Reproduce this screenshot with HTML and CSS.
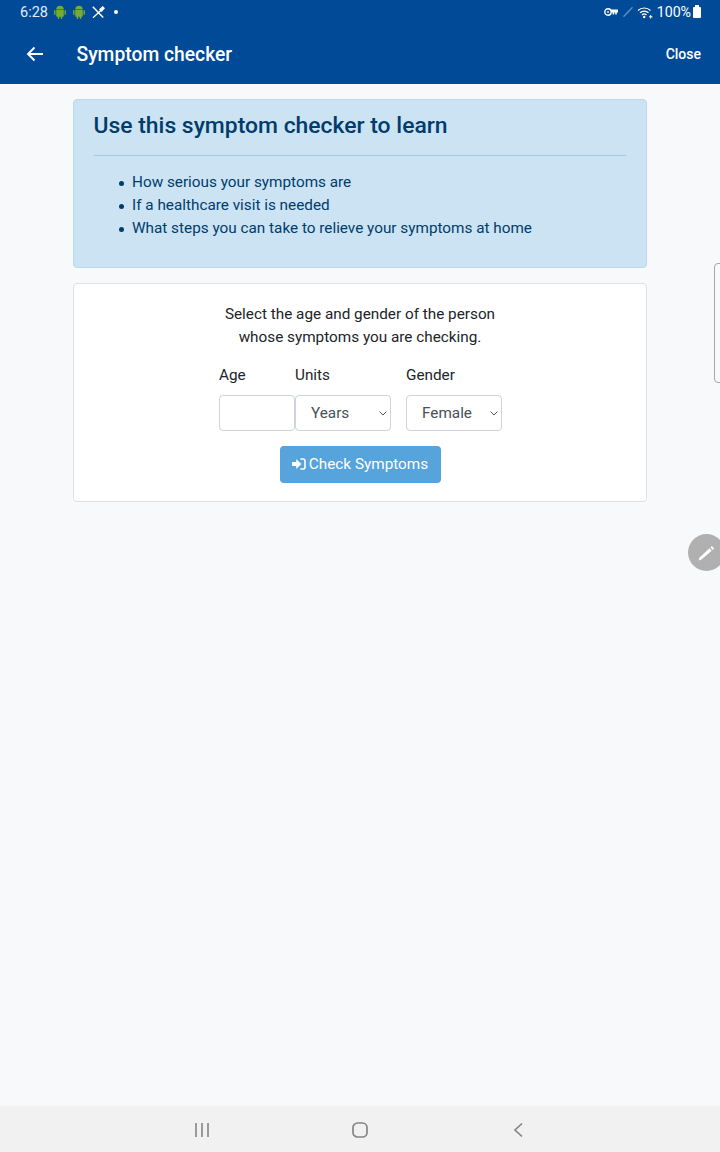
FILE: index.html
```html
<!DOCTYPE html>
<html lang="en">
<head>
  <meta charset="UTF-8" />
  <meta name="viewport" content="width=device-width, initial-scale=1.0"/>
  <title>Symptom checker</title>
  <link rel="stylesheet" href="styles.css">
</head>
<body>
  <div class="screen">
    <header class="appbar">
      <div class="statusbar">
        <div class="status-left">
          <span class="clock">6:28</span>
          <svg class="android" viewBox="0 0 12 14"><path d="M2.200 4.500a3.800 3.800 0 0 1 7.600 0zM2.200 5.100h7.600v5.700a.9.9 0 0 1-.9.9h-.6v1.500a.8.8 0 0 1-1.600 0v-1.500H5.300v1.500a.8.8 0 0 1-1.600 0v-1.500h-.6a.9.9 0 0 1-.9-.9zM.8 5.100a.7.7 0 0 1 .7.7v3.400a.7.7 0 0 1-1.400 0V5.800a.7.7 0 0 1 .7-.7zM11.200 5.100a.7.7 0 0 1 .7.7v3.400a.7.7 0 0 1-1.400 0V5.800a.7.7 0 0 1 .7-.7z" fill="#76ad2c"/></svg>
          <svg class="android" viewBox="0 0 12 14"><path d="M2.200 4.500a3.800 3.800 0 0 1 7.600 0zM2.200 5.100h7.600v5.700a.9.9 0 0 1-.9.9h-.6v1.500a.8.8 0 0 1-1.600 0v-1.500H5.300v1.500a.8.8 0 0 1-1.600 0v-1.500h-.6a.9.9 0 0 1-.9-.9zM.8 5.100a.7.7 0 0 1 .7.7v3.400a.7.7 0 0 1-1.400 0V5.800a.7.7 0 0 1 .7-.7zM11.200 5.100a.7.7 0 0 1 .7.7v3.400a.7.7 0 0 1-1.400 0V5.800a.7.7 0 0 1 .7-.7z" fill="#76ad2c"/></svg>
          <svg class="tools" viewBox="0 0 13 12"><path d="M.8 .8l10.400 10.700" stroke="#fff" stroke-width="1.500" fill="none"/><path d="M10.500 3L1 11.700" stroke="#fff" stroke-width="1.300" fill="none"/><path d="M7 3.500L10.700 0 13 2.300 9.500 6z" fill="#fff"/></svg>
          <span class="dot"></span>
        </div>
        <div class="status-right">
          <svg class="key" viewBox="0 0 14 8"><rect x=".8" y=".8" width="6.400" height="6.400" rx="3.200" stroke="#fff" stroke-width="1.400" fill="none"/><path d="M7 1.500h7v3h-1.200v2h-1.600v-2h-1v2H8.600v-2H7z" fill="#fff"/><circle cx="4" cy="4" r=".9" fill="#fff"/></svg>
          <svg class="slash" viewBox="0 0 10 10"><path d="M.5 9.700L9.500.3" stroke="#5f90c6" stroke-width="1.500"/></svg>
          <svg class="wifi" viewBox="0 0 16 13"><path d="M1 4.500a9 9 0 0 1 12.500 0M3 6.800a6.200 6.200 0 0 1 8.500 0M5 9a3.300 3.300 0 0 1 4.500 0" stroke="#fff" stroke-width="1.200" fill="none"/><circle cx="7.200" cy="11" r="1.200" fill="#fff"/><path d="M12 10.800h3.500M13.700 9v3.500" stroke="#fff" stroke-width="1"/></svg>
          <span class="battery-text">100%</span>
          <span class="battery"></span>
        </div>
      </div>
      <div class="toolbar">
        <svg class="back" viewBox="0 0 18 16"><path d="M17 8H2M8.500 1.500L2 8l6.500 6.500" stroke="#fff" stroke-width="1.900" fill="none"/></svg>
        <h1>Symptom checker</h1>
        <a class="close-link">Close</a>
      </div>
    </header>

    <main class="content">
      <section class="alert-box">
        <h2>Use this symptom checker to learn</h2>
        <hr>
        <ul>
          <li>How serious your symptoms are</li>
          <li>If a healthcare visit is needed</li>
          <li>What steps you can take to relieve your symptoms at home</li>
        </ul>
      </section>

      <section class="card">
        <p>Select the age and gender of the person<br>whose symptoms you are checking.</p>
        <form class="fields">
          <div class="field">
            <label for="age">Age</label>
            <input id="age" class="age-input" type="text">
          </div>
          <div class="field">
            <label for="units">Units</label>
            <div class="select-box" id="units">Years
              <svg viewBox="0 0 8 5"><path d="M.6.6L4 4 7.400.6" stroke="#555" stroke-width="1" fill="none"/></svg>
            </div>
          </div>
          <div class="field gender">
            <label for="gender">Gender</label>
            <div class="select-box" id="gender">Female
              <svg viewBox="0 0 8 5"><path d="M.6.6L4 4 7.400.6" stroke="#555" stroke-width="1" fill="none"/></svg>
            </div>
          </div>
        </form>
        <a class="btn">
          <svg viewBox="0 0 15 13"><path d="M0 4.200h4.500V1L10.200 6.500 4.500 12V8.800H0z" fill="#fff"/><path d="M9 1h2.800A2.200 2.200 0 0 1 14 3.200v6.600a2.200 2.200 0 0 1-2.200 2.200H9" stroke="#fff" stroke-width="1.700" fill="none"/></svg>
          Check Symptoms
        </a>
      </section>

      <!-- overlays from the device, they sit on top of the page -->
      <div class="edge-handle"></div>
      <div class="pen-button">
        <svg viewBox="0 0 18 16"><path d="M.5 15.500l1-3L11.500 3.300l2.200 2.400L3.500 14.500z" fill="#fff"/><path d="M12.500 2.400l1.400-1.300 2.300 2.400-1.500 1.400z" fill="#fff"/></svg>
      </div>
    </main>

    <nav class="navbar">
      <svg viewBox="0 0 16 16"><path d="M2 1v14M8 1v14M14 1v14" stroke="#858585" stroke-width="1.600"/></svg>
      <svg viewBox="0 0 16 16"><rect x="1" y="1" width="14" height="14" rx="4.500" stroke="#858585" stroke-width="1.700" fill="none"/></svg>
      <svg viewBox="0 0 16 16"><path d="M12 1.500L5 8l7 6.500" stroke="#858585" stroke-width="1.700" fill="none"/></svg>
    </nav>
  </div>
</body>
</html>
```

FILE: styles.css
```css
* {
  margin: 0;
  padding: 0;
  box-sizing: border-box;
  font-family: 'Roboto', sans-serif;
}

body {
  background-color: #f8f9fa;
  color: #212529;
}

.screen {
  display: flex;
  flex-direction: column;
  width: 720px;
  height: 1152px;
  overflow: hidden;
}

/* top bar */
.appbar {
  height: 84px;
  flex-shrink: 0;
  background-color: #004a98;
  color: #fff;
}

.statusbar {
  display: flex;
  justify-content: space-between;
  align-items: center;
  height: 24px;
  padding: 0 19px 0 20px;
}

.status-left,
.status-right {
  display: flex;
  align-items: center;
}

.clock {
  font-size: 14.500px;
  margin-right: 6px;
  color: #e4ecf5;
}

.android {
  width: 12px;
  height: 14px;
  margin-right: 7px;
}

.tools {
  width: 13px;
  height: 12px;
}

.dot {
  width: 4px;
  height: 4px;
  margin-left: 9px;
  border-radius: 50%;
  background-color: #fff;
}

.key {
  width: 14px;
  height: 8px;
  margin-right: 5px;
}

.slash {
  width: 10px;
  height: 10px;
  margin-right: 4px;
}

.wifi {
  width: 16px;
  height: 13px;
  margin-right: 4px;
}

.battery-text {
  font-size: 14.200px;
}

.battery {
  position: relative;
  width: 8px;
  height: 11px;
  margin-left: 2px;
  border-radius: 1px;
  background-color: #fff;
}

.battery::before {
  content: "";
  position: absolute;
  top: -2px;
  left: 2px;
  width: 4px;
  height: 2px;
  background-color: #fff;
}

.toolbar {
  display: flex;
  align-items: center;
  height: 60px;
  padding: 0 19px 0 26px;
}

.back {
  width: 18px;
  height: 16px;
  margin-right: 32.500px;
}

.toolbar h1 {
  flex: 1;
  font-size: 19.300px;
  font-weight: 500;
}

.close-link {
  font-size: 14px;
  font-weight: 500;
}

/* page */
.content {
  position: relative;
  flex: 1;
  padding: 15px 73px 0;
}

.alert-box {
  height: 169px;
  padding: 12px 20px;
  margin-bottom: 15px;
  color: #003c6c;
  background-color: #cce3f3;
  border: 1px solid #b8d9ee;
  border-radius: 4px;
}

.alert-box h2 {
  font-size: 22.900px;
  font-weight: 500;
  line-height: 27px;
  margin-left: -0.500px;
}

.alert-box hr {
  margin: 16px 0 15px;
  border: 0;
  border-top: 1px solid #a3c8ea;
}

.alert-box ul {
  list-style: none;
  padding-left: 38px;
}

.alert-box li {
  position: relative;
  font-size: 15.300px;
  line-height: 23px;
}

.alert-box li::before {
  content: "";
  position: absolute;
  top: 10px;
  left: -13px;
  width: 5px;
  height: 5px;
  border-radius: 50%;
  background-color: #003c6c;
}

.card {
  display: flex;
  flex-direction: column;
  align-items: center;
  height: 219px;
  padding: 19px 20px;
  background-color: #fff;
  border: 1px solid #dfe0e1;
  border-radius: 4px;
}

.card p {
  font-size: 15.300px;
  line-height: 23px;
  text-align: center;
}

.fields {
  display: flex;
  margin-top: 15px;
  margin-left: 1px;
}

.field label {
  display: block;
  font-size: 15.300px;
  line-height: 23px;
  margin-bottom: 8px;
}

.gender {
  margin-left: 15px;
}

.age-input,
.select-box {
  display: flex;
  align-items: center;
  height: 36px;
  background-color: #fff;
  border: 1px solid #ced4da;
  border-radius: 4px;
  font-size: 15.300px;
  color: #495057;
}

.age-input {
  width: 76px;
}

.select-box {
  position: relative;
  width: 96px;
  padding-left: 15px;
}

.select-box svg {
  position: absolute;
  top: 15px;
  right: 3px;
  width: 8px;
  height: 5px;
}

.btn {
  display: flex;
  flex-shrink: 0;
  align-items: center;
  justify-content: center;
  gap: 3px;
  width: 161px;
  height: 37px;
  padding-bottom: 2px;
  margin-top: 15px;
  font-size: 15.300px;
  color: #fff;
  background-color: #57a3dc;
  border-radius: 4px;
}

.btn svg {
  width: 14px;
  height: 12px;
}

.edge-handle {
  position: absolute;
  top: 179px;
  right: -6px;
  width: 12px;
  height: 120px;
  border: 1px solid #a5a8ab;
  border-radius: 4px;
}

.pen-button {
  position: absolute;
  top: 450px;
  right: -5px;
  display: flex;
  align-items: center;
  justify-content: center;
  width: 37px;
  height: 37px;
  border-radius: 50%;
  background-color: #b0b0b0;
}

.pen-button svg {
  width: 18px;
  height: 16px;
}

/* bottom nav */
.navbar {
  display: flex;
  align-items: center;
  justify-content: center;
  height: 46px;
  flex-shrink: 0;
  gap: 142px;
  padding-top: 2px;
  background-color: #f1f1f1;
}

.navbar svg {
  width: 16px;
  height: 16px;
}
```
